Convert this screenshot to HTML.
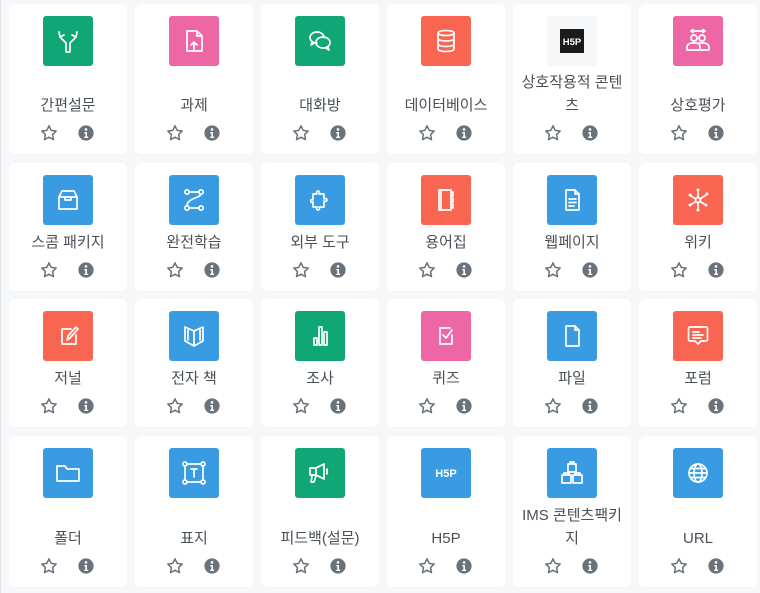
<!DOCTYPE html>
<html><head><meta charset="utf-8">
<style>
*{box-sizing:border-box;margin:0;padding:0}
body{width:760px;height:593px;background:#f6f7f9;font-family:"Liberation Sans","Noto Sans CJK KR",sans-serif;overflow:hidden;position:relative}
.edge{position:absolute;left:0;top:0;width:1px;height:593px;background:#dee2e6}
.grid{position:absolute;left:9px;top:4px;display:grid;grid-template-columns:repeat(6,118px);grid-template-rows:150px 128px 128px 151px;column-gap:8px;row-gap:8.5px}
.card{background:#fff;border-radius:6px;display:flex;flex-direction:column;align-items:center;padding-top:12px}
.ic{width:50px;height:50px;border-radius:3px;display:flex;align-items:center;justify-content:center;flex:none}
.ic svg{width:50px;height:50px}
.g{background:#11a676}.p{background:#ec67a3}.b{background:#399be2}.o{background:#f86550}.w{background:#f6f7f9}
.lb{flex:1;display:flex;align-items:flex-end;justify-content:center;text-align:center;color:#495057;font-size:15px;line-height:23px;padding:0 5px 1px;width:100%;position:relative;top:2px}
.ac{height:38px;width:100%;position:relative;flex:none}
.st{position:absolute;left:31px;top:8px;width:18px;height:18px}
.in{position:absolute;left:69px;top:9px;width:16px;height:16px}
svg .s{fill:none;stroke:#fff;stroke-width:1.7;stroke-linecap:round;stroke-linejoin:round}
</style></head><body><div class="edge"></div>
<svg width="0" height="0" style="position:absolute">
<defs>
<symbol id="star" viewBox="0 0 18 18"><path d="M9 1.8l2.2 4.6 5 .7-3.6 3.5.9 5L9 13.2l-4.5 2.4.9-5L1.8 7.1l5-.7z" fill="none" stroke="#6a737b" stroke-width="1.5" stroke-linejoin="round"/></symbol>
<symbol id="info" viewBox="0 0 16 16"><circle cx="8" cy="8" r="7.6" fill="#6a737b"/><circle cx="8" cy="4.4" r="1.3" fill="#fff"/><path d="M6.3 7h2.7v4.6h1.1v1.4H6.2v-1.4h1.2V8.4H6.3z" fill="#fff"/></symbol>
</defs></svg>
<div class="grid">
<div class="card"><div class="ic g"><svg viewBox="0 0 50 50"><path class="s" d="M23 36V27l-6-6M27 36V27l6-6M16 16l1 5 4-2M34 16l-1 5-4-2M23 36h4"/></svg></div><div class="lb">간편설문</div><div class="ac"><svg class="st"><use href="#star"/></svg><svg class="in"><use href="#info"/></svg></div></div>
<div class="card"><div class="ic p"><svg viewBox="0 0 50 50"><path class="s" d="M18 15h10l5 5v15H18zM28 15v5h5M25 35v-9M22 29l3-3 3 3"/></svg></div><div class="lb">과제</div><div class="ac"><svg class="st"><use href="#star"/></svg><svg class="in"><use href="#info"/></svg></div></div>
<div class="card"><div class="ic g"><svg viewBox="0 0 50 50"><path class="s" d="M22 27c-4 0-7-2.5-7-5.5S18 16 22 16s7 2.5 7 5.5M17 26l-1 3 3-2M28 21c4 0 7 2.5 7 5.5S32 32 28 32s-7-2.5-7-5.5 3-5.5 7-5.5zM33 31l1 3-3-2"/></svg></div><div class="lb">대화방</div><div class="ac"><svg class="st"><use href="#star"/></svg><svg class="in"><use href="#info"/></svg></div></div>
<div class="card"><div class="ic o"><svg viewBox="0 0 50 50"><ellipse class="s" cx="25" cy="17" rx="8" ry="2.5"/><path class="s" d="M17 17v16c0 1.5 3.5 2.5 8 2.5s8-1 8-2.5V17M17 22.5c0 1.5 3.5 2.5 8 2.5s8-1 8-2.5M17 28c0 1.5 3.5 2.5 8 2.5s8-1 8-2.5"/></svg></div><div class="lb">데이터베이스</div><div class="ac"><svg class="st"><use href="#star"/></svg><svg class="in"><use href="#info"/></svg></div></div>
<div class="card"><div class="ic w"><svg viewBox="0 0 50 50"><rect x="13" y="13" width="24" height="24" fill="#1b1b1b"/><text x="25" y="29" font-family="Liberation Sans" font-weight="bold" font-size="9.5" fill="#fff" text-anchor="middle">H5P</text></svg></div><div class="lb">상호작용적 콘텐츠</div><div class="ac"><svg class="st"><use href="#star"/></svg><svg class="in"><use href="#info"/></svg></div></div>
<div class="card"><div class="ic p"><svg viewBox="0 0 50 50"><path class="s" d="M18 15h14M18 15l2-1.5M18 15l2 1.5M32 15l-2-1.5M32 15l-2 1.5"/><circle class="s" cx="21" cy="22" r="3"/><circle class="s" cx="29" cy="22" r="3"/><path class="s" d="M14 34v-3c0-2 2-4 5-4h4c3 0 4 2 4 4v3zM25 27h6c3 0 5 2 5 4v3H25"/></svg></div><div class="lb">상호평가</div><div class="ac"><svg class="st"><use href="#star"/></svg><svg class="in"><use href="#info"/></svg></div></div>
<div class="card"><div class="ic b"><svg viewBox="0 0 50 50"><path class="s" d="M16 22l3-6h12l3 6zM16 22v12h18V22M22 22v3h6v-3"/></svg></div><div class="lb">스콤 패키지</div><div class="ac"><svg class="st"><use href="#star"/></svg><svg class="in"><use href="#info"/></svg></div></div>
<div class="card"><div class="ic b"><svg viewBox="0 0 50 50"><circle class="s" cx="18" cy="17" r="2.2"/><circle class="s" cx="32" cy="17" r="2.2"/><circle class="s" cx="18" cy="33" r="2.2"/><circle class="s" cx="32" cy="33" r="2.2"/><path class="s" d="M20 17h10M20 33h10M32 19c0 4-14 4-14 12"/></svg></div><div class="lb">완전학습</div><div class="ac"><svg class="st"><use href="#star"/></svg><svg class="in"><use href="#info"/></svg></div></div>
<div class="card"><div class="ic b"><svg viewBox="0 0 50 50"><path class="s" d="M18 19h4c-2-4 4-4 2 0h5v5c4-2 4 4 0 2v6h-5c2 4-4 4-2 0h-4v-5c-3 2-3-4 0-2z"/></svg></div><div class="lb">외부 도구</div><div class="ac"><svg class="st"><use href="#star"/></svg><svg class="in"><use href="#info"/></svg></div></div>
<div class="card"><div class="ic o"><svg viewBox="0 0 50 50"><path class="s" d="M18 15h12v20H18zM30 17h2v4h-2M32 23v4h-2M32 29v4h-2M20 15v20"/></svg></div><div class="lb">용어집</div><div class="ac"><svg class="st"><use href="#star"/></svg><svg class="in"><use href="#info"/></svg></div></div>
<div class="card"><div class="ic b"><svg viewBox="0 0 50 50"><path class="s" d="M19 15h9l4 4v16H19zM28 15v4h4M22 24h7M22 27.5h7M22 31h5"/></svg></div><div class="lb">웹페이지</div><div class="ac"><svg class="st"><use href="#star"/></svg><svg class="in"><use href="#info"/></svg></div></div>
<div class="card"><div class="ic o"><svg viewBox="0 0 50 50"><circle class="s" cx="25" cy="25" r="2.5"/><path class="s" d="M25 22.5V16M27 24l6-4M27 26.5l5 3M23 24l-5-3M23 26.5l-5 3M25 27.5V34"/><circle cx="25" cy="15" r="1.5" fill="#fff"/><circle cx="34" cy="19" r="1.5" fill="#fff"/><circle cx="33" cy="30" r="1.5" fill="#fff"/><circle cx="17" cy="20" r="1.5" fill="#fff"/><circle cx="17" cy="30" r="1.5" fill="#fff"/><circle cx="25" cy="35" r="1.5" fill="#fff"/></svg></div><div class="lb">위키</div><div class="ac"><svg class="st"><use href="#star"/></svg><svg class="in"><use href="#info"/></svg></div></div>
<div class="card"><div class="ic o"><svg viewBox="0 0 50 50"><path class="s" d="M28 18h-9v15h14v-9M24 29l1-4 8-9 2 2-8 9z"/></svg></div><div class="lb">저널</div><div class="ac"><svg class="st"><use href="#star"/></svg><svg class="in"><use href="#info"/></svg></div></div>
<div class="card"><div class="ic b"><svg viewBox="0 0 50 50"><path class="s" d="M16 16l9 4 9-4v14l-9 5-9-5zM25 20v15M19 19v10M31 19v10"/></svg></div><div class="lb">전자 책</div><div class="ac"><svg class="st"><use href="#star"/></svg><svg class="in"><use href="#info"/></svg></div></div>
<div class="card"><div class="ic g"><svg viewBox="0 0 50 50"><path class="s" d="M19 27h3v7h-3zM24 16h3v18h-3zM29 21h3v13h-3z"/></svg></div><div class="lb">조사</div><div class="ac"><svg class="st"><use href="#star"/></svg><svg class="in"><use href="#info"/></svg></div></div>
<div class="card"><div class="ic p"><svg viewBox="0 0 50 50"><path class="s" d="M29 17h-10v16h12v-9M22 24l3 3 6-8"/></svg></div><div class="lb">퀴즈</div><div class="ac"><svg class="st"><use href="#star"/></svg><svg class="in"><use href="#info"/></svg></div></div>
<div class="card"><div class="ic b"><svg viewBox="0 0 50 50"><path class="s" d="M19 15h9l4 4v16H19zM28 15v4h4"/></svg></div><div class="lb">파일</div><div class="ac"><svg class="st"><use href="#star"/></svg><svg class="in"><use href="#info"/></svg></div></div>
<div class="card"><div class="ic o"><svg viewBox="0 0 50 50"><path class="s" d="M17 16h16a1.5 1.5 0 0 1 1.5 1.5v11a1.5 1.5 0 0 1-1.5 1.5h-5l-3 3-3-3h-5a1.5 1.5 0 0 1-1.5-1.5v-11A1.5 1.5 0 0 1 17 16zM20 21h6M20 24h10M20 27h8"/></svg></div><div class="lb">포럼</div><div class="ac"><svg class="st"><use href="#star"/></svg><svg class="in"><use href="#info"/></svg></div></div>
<div class="card"><div class="ic b"><svg viewBox="0 0 50 50"><path class="s" d="M14 18h8l2 3h12v12H14z"/></svg></div><div class="lb">폴더</div><div class="ac"><svg class="st"><use href="#star"/></svg><svg class="in"><use href="#info"/></svg></div></div>
<div class="card"><div class="ic b"><svg viewBox="0 0 50 50"><path class="s" d="M18 16h14M18 34h14M16 18v14M34 18v14"/><circle class="s" cx="16" cy="16" r="2"/><circle class="s" cx="34" cy="16" r="2"/><circle class="s" cx="16" cy="34" r="2"/><circle class="s" cx="34" cy="34" r="2"/><path class="s" d="M22 21h6M25 21v8"/></svg></div><div class="lb">표지</div><div class="ac"><svg class="st"><use href="#star"/></svg><svg class="in"><use href="#info"/></svg></div></div>
<div class="card"><div class="ic g"><svg viewBox="0 0 50 50"><path class="s" d="M15 20h6v7h-6zM21 20l8-4v15l-8-4M32 21v5M17 28l-1 6h3l2-6"/></svg></div><div class="lb">피드백(설문)</div><div class="ac"><svg class="st"><use href="#star"/></svg><svg class="in"><use href="#info"/></svg></div></div>
<div class="card"><div class="ic b"><svg viewBox="0 0 50 50"><text x="25" y="29" font-family="Liberation Sans" font-weight="bold" font-size="11" fill="#fff" text-anchor="middle">H5P</text></svg></div><div class="lb">H5P</div><div class="ac"><svg class="st"><use href="#star"/></svg><svg class="in"><use href="#info"/></svg></div></div>
<div class="card"><div class="ic b"><svg viewBox="0 0 50 50"><path class="s" d="M21 16h8v8h-8zM23 16v-2h4v2M15 27h9v8h-9zM26 27h9v8h-9zM17 27v-2h5v2M28 27v-2h5v2"/></svg></div><div class="lb">IMS 콘텐츠팩키지</div><div class="ac"><svg class="st"><use href="#star"/></svg><svg class="in"><use href="#info"/></svg></div></div>
<div class="card"><div class="ic b"><svg viewBox="0 0 50 50"><circle class="s" cx="25" cy="25" r="9"/><ellipse class="s" cx="25" cy="25" rx="4" ry="9"/><path class="s" d="M16 25h18M17.5 20.5h15M17.5 29.5h15"/></svg></div><div class="lb">URL</div><div class="ac"><svg class="st"><use href="#star"/></svg><svg class="in"><use href="#info"/></svg></div></div>
</div>
</body></html>
